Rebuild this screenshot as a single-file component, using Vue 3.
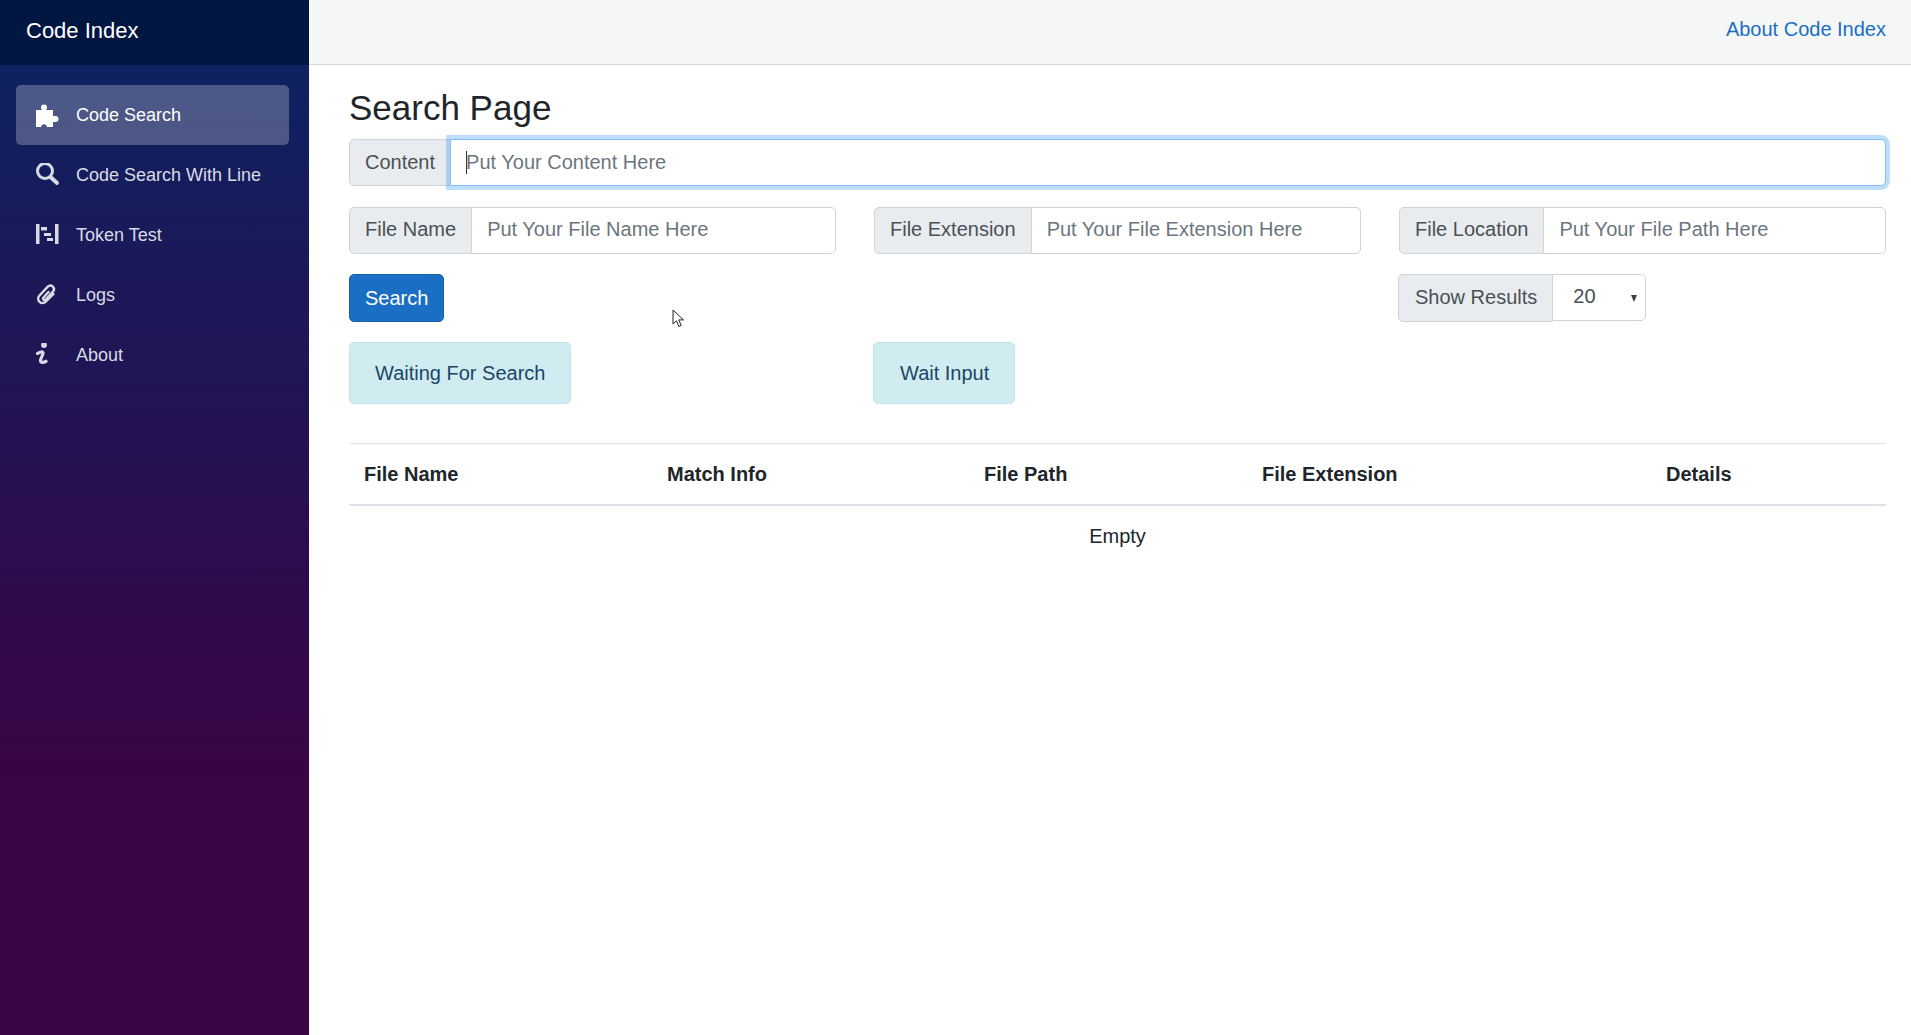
<script setup>
import { ref, onMounted } from 'vue'

const menu = [
  { label: 'Code Search', icon: 'puzzle', active: true },
  { label: 'Code Search With Line', icon: 'search' },
  { label: 'Token Test', icon: 'token' },
  { label: 'Logs', icon: 'clip' },
  { label: 'About', icon: 'info' }
]

const filters = [
  { label: 'File Name', placeholder: 'Put Your File Name Here' },
  { label: 'File Extension', placeholder: 'Put Your File Extension Here' },
  { label: 'File Location', placeholder: 'Put Your File Path Here' }
]

const columns = ['File Name', 'Match Info', 'File Path', 'File Extension', 'Details']
const columnWidths = [303, 317, 278, 404, 235]

const contentInput = ref(null)

onMounted(() => {
  contentInput.value.focus()
})
</script>

<template>
  <div class="layout">
    <aside class="sidebar">
      <div class="brand">Code Index</div>
      <ul class="menu">
        <li v-for="item in menu" :key="item.label" class="menu-item" :class="{ active: item.active }">
          <svg class="menu-icon" viewBox="0 0 24 24">
            <g v-if="item.icon === 'puzzle'" fill="currentColor">
              <path d="M0 7h6V5h4v2h7v6h2v6h-2v5h-6.200a2.800 2.800 0 0 0-5.600 0H0z" />
              <circle cx="8" cy="4.500" r="3" />
              <circle cx="19.500" cy="16" r="3" />
            </g>
            <template v-else-if="item.icon === 'search'">
              <circle cx="9" cy="8" r="7.500" fill="none" stroke="currentColor" stroke-width="3" />
              <path d="M15 14.500l6 5.500" fill="none" stroke="currentColor" stroke-width="4" stroke-linecap="round" />
            </template>
            <path
              v-else-if="item.icon === 'token'"
              fill="currentColor"
              d="M0 1h3.500v20H0zM19 1h3.500v20H19zM5 4h6v3.500H5zM8 10h7v3H8zM11 15h6v3h-6z"
            />
            <path
              v-else-if="item.icon === 'clip'"
              fill="none"
              stroke="currentColor"
              stroke-width="2.400"
              stroke-linecap="round"
              d="M12.500 9l-5 5.500c-1.500 1.700.8 3.500 2.400 1.800L17 8.500c3-3.300-1.800-8.300-5.200-4.800L3.500 12.500c-4 4.500 2 10.500 6.500 6L17.500 11"
            />
            <g v-else fill="none" stroke="currentColor">
              <circle cx="8" cy="2" r="2.900" fill="currentColor" stroke="none" />
              <path stroke-width="3.200" stroke-linecap="round" d="M1.500 10.500c2-1.500 5-2.300 5.500-.8.500 1.600-2.600 5.500-2.500 8 .1 2.200 3.200 2 5.500.6" />
            </g>
          </svg>
          <span>{{ item.label }}</span>
        </li>
      </ul>
    </aside>

    <div class="page">
      <nav class="topbar">
        <a class="top-link">About Code Index</a>
      </nav>

      <main class="content">
        <h3 class="title">Search Page</h3>

        <div class="input-group first">
          <span class="addon">Content</span>
          <div class="field">
            <input ref="contentInput" class="control" placeholder="Put Your Content Here" />
            <i class="text-cursor"></i>
          </div>
        </div>

        <div class="grid">
          <div v-for="f in filters" :key="f.label" class="input-group">
            <span class="addon filter-addon">{{ f.label }}</span>
            <input class="control filter-control" :placeholder="f.placeholder" />
          </div>
        </div>

        <div class="grid">
          <div><button class="btn">Search</button></div>
          <div></div>
          <div class="input-group results">
            <span class="addon results-addon">Show Results</span>
            <div class="field">
              <select class="control select">
                <option>20</option>
                <option>50</option>
                <option>100</option>
              </select>
              <i class="caret"></i>
            </div>
          </div>
        </div>

        <div class="grid">
          <div><div class="alert">Waiting For Search</div></div>
          <div><div class="alert second">Wait Input</div></div>
        </div>

        <table class="table">
          <colgroup>
            <col v-for="(w, i) in columnWidths" :key="i" :style="{ width: w + 'px' }" />
          </colgroup>
          <thead>
            <tr>
              <th v-for="c in columns" :key="c">{{ c }}</th>
            </tr>
          </thead>
          <tbody>
            <tr>
              <td :colspan="columns.length">Empty</td>
            </tr>
          </tbody>
        </table>
      </main>
    </div>

    <svg class="pointer" viewBox="0 0 14 20" width="14" height="20">
      <path d="M1 1v14l3.500-3.200 2.400 5.700 2.300-1-2.400-5.600H11.500z" fill="#fff" stroke="#222" stroke-width="1" />
    </svg>
  </div>
</template>

<style>
body {
  background: #fff;
}
</style>

<style scoped>
* {
  box-sizing: border-box;
}

.layout {
  display: flex;
  min-height: 1035px;
  font-family: 'Liberation Sans', Arial, sans-serif;
  font-size: 20px;
  line-height: 1.5;
  color: #212529;
}

.sidebar {
  width: 309px;
  flex-shrink: 0;
  color: #fff;
  background: linear-gradient(180deg, #0a2463 0%, #3a0445 75%, #3a0445 100%);
}

.brand {
  height: 65px;
  padding: 0 26px;
  font-size: 22px;
  line-height: 61px;
  background: #011640;
}

.menu {
  list-style: none;
  margin: 0;
  padding: 20px 20px 20px 16px;
}

.menu-item {
  display: flex;
  align-items: center;
  height: 60px;
  padding-left: 20px;
  font-size: 18px;
  color: #d9dbe4;
  border-radius: 5px;
}

.menu-item.active {
  color: #fff;
  background: rgba(255, 255, 255, 0.25);
}

.menu-icon {
  width: 24px;
  height: 24px;
  margin-right: 16px;
  flex-shrink: 0;
}

.page {
  flex: 1;
  min-width: 0;
}

.topbar {
  height: 65px;
  display: flex;
  justify-content: flex-end;
  align-items: center;
  padding: 0 25px 6px 0;
  background: #f5f7f7;
  border-bottom: 1px solid #d8d8d8;
}

.top-link {
  color: #1a6ec4;
}

.content {
  padding: 22px 25px 0 40px;
}

.title {
  margin: 0 0 10px;
  font-size: 35px;
  font-weight: 400;
  line-height: 1.2;
  color: #212529;
}

.input-group {
  display: flex;
  margin-bottom: 20px;
}

.input-group.first {
  margin-bottom: 21px;
}

.grid {
  display: grid;
  grid-template-columns: repeat(3, 1fr);
  column-gap: 38px;
}

.addon {
  padding: 7px 15px;
  color: #495057;
  background: #e9ecef;
  border: 1px solid #ced4da;
  border-radius: 5px 0 0 5px;
  white-space: nowrap;
}

.filter-addon {
  padding-top: 6px;
  padding-bottom: 8px;
}

.results-addon {
  padding-left: 16px;
}

.field {
  position: relative;
  flex: 1;
  display: flex;
  min-width: 0;
}

.control {
  flex: 1;
  min-width: 0;
  height: 47px;
  padding: 7px 15px;
  margin-left: -1px;
  font: inherit;
  color: #495057;
  background: #fff;
  border: 1px solid #ced4da;
  border-radius: 0 5px 5px 0;
  outline: none;
  caret-color: transparent;
}

.filter-control {
  padding-top: 6px;
  padding-bottom: 8px;
}

.control::placeholder {
  color: #6c757d;
  opacity: 1;
}

.control:focus {
  position: relative;
  border-color: #80bdff;
  box-shadow: 0 0 0 4px rgba(0, 123, 255, 0.25);
}

.text-cursor {
  position: absolute;
  left: 15px;
  top: 12px;
  width: 1px;
  height: 23px;
  background: #333;
}

.results {
  width: 248px;
  margin-left: -1px;
}

.select {
  width: 100%;
  appearance: none;
  padding: 5px 15px 9px 20px;
}

.caret {
  position: absolute;
  right: 9px;
  top: 21px;
  width: 0;
  height: 0;
  border-left: 3.500px solid transparent;
  border-right: 3.500px solid transparent;
  border-top: 7px solid #3b4047;
}

.btn {
  display: block;
  height: 48px;
  padding: 0 15px;
  font: inherit;
  color: #fff;
  background: #1a6ec4;
  border: 1px solid #1560ad;
  border-radius: 5px;
  margin-bottom: 20px;
}

.alert {
  display: inline-block;
  padding: 15px 25px;
  margin-bottom: 39px;
  color: #1a4666;
  background: #d1ecf1;
  border: 1px solid #bee5eb;
  border-radius: 5px;
}

.alert.second {
  margin-left: -1px;
  padding-left: 26px;
}

.table {
  width: 100%;
  table-layout: fixed;
  border-collapse: collapse;
}

.table th {
  padding: 15px;
  text-align: left;
  font-weight: 700;
  border-top: 1px solid #dee2e6;
  border-bottom: 2px solid #dee2e6;
}

.table td {
  padding: 15px;
  text-align: center;
}

.pointer {
  position: absolute;
  left: 672px;
  top: 309px;
}
</style>
